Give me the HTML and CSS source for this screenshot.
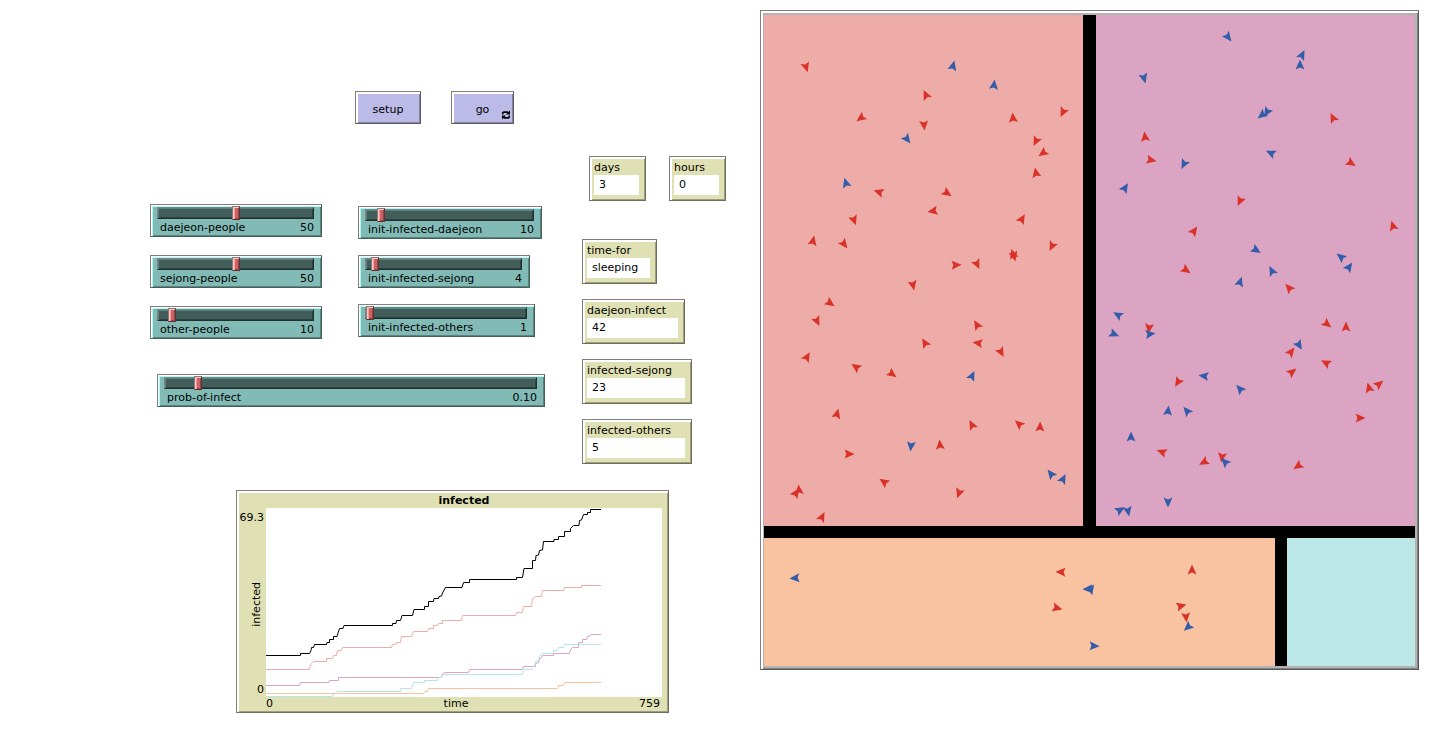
FILE: index.html
```html
<!DOCTYPE html>
<html lang="en">
<head>
<meta charset="utf-8">
<title>Infection model</title>
<link rel="stylesheet" href="styles.css">
</head>
<body>
<main class="interface">
  <section class="panel" aria-label="Controls">
    <div class="buttons">
      <button class="command command-setup" type="button">setup</button>
      <button class="command command-go" type="button">go
        <svg class="forever" viewBox="0 0 10 10" aria-hidden="true">
          <path d="M1 4.4V2.6L2.4 1.2H6.6L7.4 2L9 .6V4.6H5L6.2 3.4L5.8 3H3L2.4 3.6V4.4Z"/>
          <path d="M9 5.6V7.4L7.6 8.8H3.4L2.6 8L1 9.4V5.4H5L3.8 6.6L4.2 7H7L7.6 6.4V5.6Z"/>
        </svg>
      </button>
    </div>

    <div class="workspace">
      <div class="sliders">
        <div class="slider-columns">
          <div class="slider-column">
            <div class="slider">
              <input type="range" id="daejeon-people" min="0" max="100" value="50">
              <label for="daejeon-people">daejeon-people</label><output for="daejeon-people">50</output>
            </div>
            <div class="slider">
              <input type="range" id="sejong-people" min="0" max="100" value="50">
              <label for="sejong-people">sejong-people</label><output for="sejong-people">50</output>
            </div>
            <div class="slider">
              <input type="range" id="other-people" min="0" max="150" value="10">
              <label for="other-people">other-people</label><output for="other-people">10</output>
            </div>
          </div>
          <div class="slider-column slider-column-initial">
            <div class="slider slider-wide">
              <input type="range" id="init-daejeon" min="0" max="150" value="10">
              <label for="init-daejeon">init-infected-daejeon</label><output for="init-daejeon">10</output>
            </div>
            <div class="slider">
              <input type="range" id="init-sejong" min="0" max="120" value="4">
              <label for="init-sejong">init-infected-sejong</label><output for="init-sejong">4</output>
            </div>
            <div class="slider slider-medium">
              <input type="range" id="init-others" min="1" max="100" value="1">
              <label for="init-others">init-infected-others</label><output for="init-others">1</output>
            </div>
          </div>
        </div>
        <div class="slider slider-full">
          <input type="range" id="prob" min="0" max="1.25" step="0.01" value="0.10">
          <label for="prob">prob-of-infect</label><output for="prob">0.10</output>
        </div>
      </div>

      <div class="monitors">
        <div class="clock">
          <div class="monitor monitor-xs"><span>days</span><output>3</output></div>
          <div class="monitor monitor-xs"><span>hours</span><output>0</output></div>
        </div>
        <div class="monitor monitor-sm"><span>time-for</span><output>sleeping</output></div>
        <div class="monitor monitor-md"><span>daejeon-infect</span><output>42</output></div>
        <div class="monitor monitor-lg"><span>infected-sejong</span><output>23</output></div>
        <div class="monitor monitor-lg"><span>infected-others</span><output>5</output></div>
      </div>
    </div>

    <figure class="plot">
      <figcaption>infected</figcaption>
      <div class="axis-y"><span>69.3</span><span class="axis-name">infected</span><span>0</span></div>
      <svg class="chart" viewBox="0 0 396 189" preserveAspectRatio="none" role="img" aria-label="infected over time">
        <polyline class="line-orange" points="0,185.5 157.5,185.5 158.5,183.5 161.5,183.5 162.5,180.5 291.5,180.5 292.5,177.5 297.5,177.5 298.5,174.5 335,174.5"/>
        <polyline class="line-purple" points="0,177.5 33.5,177.5 34.5,174.5 63,174.5 63.5,172.5 72.5,172.5 72.5,169.5 175,169.5 176,166.5 178.5,164.5 202.5,164.5 203.5,161.5 256.5,161.5 257.5,158.5 269.5,158.5 269.5,155.5 272.5,155 273.5,150.5 275.5,150 276.5,147.5 287.5,147.5 287.5,145.5 303.5,145.5 305,141 306.5,139.5 312.5,139.5 312.5,134.5 316.5,134.5 316.5,131.5 320.5,131.5 321.5,128.5 323.5,128.5 324.5,126.5 335,126.5"/>
        <polyline class="line-cyan" points="0,188.5 66.5,188.5 67.5,186 69.5,185.5 70.5,183.5 134.5,183.5 134.5,180.5 145.5,180.5 147.5,174.5 158.5,174.5 158.5,172.5 171.5,172.5 172.5,169.5 175.5,169.5 176.5,166.5 256.5,166.5 257.5,161.5 265.5,161.5 266.5,158.5 269,157.5 269.5,153.5 272.5,153 273.5,147.5 276.5,145.5 287.5,145.5 287.5,142.5 291.5,142.5 292.5,139.5 297.5,139.5 298.5,136.5 335,136.5"/>
        <polyline class="line-pink" points="0,161.5 43.5,161.5 44,158.5 45.5,155.5 47.5,153.5 60.5,153.5 60.5,150.5 66.5,150.5 67.5,147.5 70.5,147.5 71.5,142.5 75,142.5 76.5,139.5 125.5,139.5 126.5,136.5 129.5,136.5 130.5,134.5 134.5,134.5 135.5,128.5 145.5,128.5 147.5,123.5 161.5,123.5 162.5,120.5 167.5,120.5 167.5,117.5 171.5,117.5 172.5,115.5 176.5,115.5 176.5,112.5 195.5,112.5 196.5,107.5 249.5,107.5 250.5,104.5 256.5,104.5 257.5,98.5 265.5,98.5 266.5,90.5 269.5,88.5 275.5,88.5 276.5,82.5 297.5,82.5 298.5,79.5 315.5,79.5 315.5,77.5 335,77.5"/>
        <polyline class="line-black" points="0,147.5 34.5,147.5 34.5,145.5 43.5,145.5 45,142.5 45.5,139.5 47.5,139.5 48.5,136.5 60.5,136.5 61,134.5 63.5,134.5 63.5,131.5 67.5,131.5 67.5,128.5 71,128.5 72,125 73.5,120.5 77,120.5 78,117.5 126.5,117.5 126.5,115.5 130,115.5 130.5,112.5 134.5,112.5 136,107.5 146.5,107.5 148,101.5 158.5,101.5 158.5,98.5 162.5,98.5 162.5,93.5 167.5,93.5 168,90.5 172.5,90.5 173,88.5 175.5,88 176.5,85 179.5,79.5 196,79.5 197.5,74.5 203.5,74.5 203.5,71.5 250.5,71.5 250.5,69.5 256.5,69.5 258,60.5 266.5,60.5 266.5,52.5 269.5,52.5 270,47.5 272.5,47 273.5,42.5 276.5,42 277.5,33.5 288,33.5 288,31.5 292.5,31.5 292.5,28.5 298.5,28.5 298.5,23.5 304.5,23.5 304.5,20.5 307.5,17.5 313,17.5 313.5,12.5 315.5,12 317.5,6.5 321.5,6.5 321.5,4.5 324.5,4.5 324.5,1.5 335,1.5"/>
      </svg>
      <div class="axis-x"><span>0</span><span>time</span><span>759</span></div>
    </figure>
  </section>

  <section class="world" aria-label="World view">
    <svg viewBox="764 15 651 651" role="img" aria-label="People in four regions">
      <defs><path id="t" d="M0-5.6L4.5 4.4L0 2.6L-4.5 4.4Z"/></defs>
      <g shape-rendering="crispEdges">
        <rect x="764" y="15" width="651" height="651" fill="#000"/>
        <rect class="patch-pink" x="764" y="15" width="319" height="511"/>
        <rect class="patch-purple" x="1096" y="15" width="319" height="511"/>
        <rect class="patch-orange" x="764" y="538" width="511" height="128"/>
        <rect class="patch-cyan" x="1287" y="538" width="128" height="128"/>
      </g>
      <g class="infected">
        <use href="#t" transform="translate(806 67) rotate(163)"/>
        <use href="#t" transform="translate(926 95) rotate(335)"/>
        <use href="#t" transform="translate(861 118) rotate(234)"/>
        <use href="#t" transform="translate(924 125) rotate(175)"/>
        <use href="#t" transform="translate(1013 118) rotate(355)"/>
        <use href="#t" transform="translate(1063 112) rotate(205)"/>
        <use href="#t" transform="translate(1036 141) rotate(206)"/>
        <use href="#t" transform="translate(1043 153) rotate(234)"/>
        <use href="#t" transform="translate(1036 173) rotate(348)"/>
        <use href="#t" transform="translate(879 192) rotate(288)"/>
        <use href="#t" transform="translate(947 193) rotate(124)"/>
        <use href="#t" transform="translate(933 211) rotate(261)"/>
        <use href="#t" transform="translate(1022 219) rotate(31)"/>
        <use href="#t" transform="translate(854 220) rotate(160)"/>
        <use href="#t" transform="translate(813 241) rotate(12)"/>
        <use href="#t" transform="translate(844 244) rotate(142)"/>
        <use href="#t" transform="translate(1052 246) rotate(205)"/>
        <use href="#t" transform="translate(1013 254) rotate(343)"/>
        <use href="#t" transform="translate(1014 256) rotate(165)"/>
        <use href="#t" transform="translate(956 265) rotate(88)"/>
        <use href="#t" transform="translate(977 264) rotate(155)"/>
        <use href="#t" transform="translate(913 285) rotate(168)"/>
        <use href="#t" transform="translate(830 303) rotate(125)"/>
        <use href="#t" transform="translate(817 321) rotate(155)"/>
        <use href="#t" transform="translate(977 325) rotate(329)"/>
        <use href="#t" transform="translate(925 343) rotate(329)"/>
        <use href="#t" transform="translate(978 343) rotate(278)"/>
        <use href="#t" transform="translate(1001 352) rotate(152)"/>
        <use href="#t" transform="translate(807 357) rotate(30)"/>
        <use href="#t" transform="translate(856 367) rotate(305)"/>
        <use href="#t" transform="translate(892 374) rotate(126)"/>
        <use href="#t" transform="translate(837 414) rotate(15)"/>
        <use href="#t" transform="translate(972 425) rotate(333)"/>
        <use href="#t" transform="translate(1019 424) rotate(312)"/>
        <use href="#t" transform="translate(1040 427) rotate(2)"/>
        <use href="#t" transform="translate(940 445) rotate(355)"/>
        <use href="#t" transform="translate(849 454) rotate(90)"/>
        <use href="#t" transform="translate(884 482) rotate(305)"/>
        <use href="#t" transform="translate(959 493) rotate(200)"/>
        <use href="#t" transform="translate(799 490) rotate(355)"/>
        <use href="#t" transform="translate(796 493) rotate(32)"/>
        <use href="#t" transform="translate(822 517) rotate(27)"/>
        <use href="#t" transform="translate(1333 118) rotate(333)"/>
        <use href="#t" transform="translate(1145 137) rotate(353)"/>
        <use href="#t" transform="translate(1151 160) rotate(102)"/>
        <use href="#t" transform="translate(1351 163) rotate(122)"/>
        <use href="#t" transform="translate(1240 201) rotate(204)"/>
        <use href="#t" transform="translate(1194 231) rotate(36)"/>
        <use href="#t" transform="translate(1393 226) rotate(343)"/>
        <use href="#t" transform="translate(1186 270) rotate(124)"/>
        <use href="#t" transform="translate(1289 288) rotate(318)"/>
        <use href="#t" transform="translate(1149 328) rotate(187)"/>
        <use href="#t" transform="translate(1327 324) rotate(128)"/>
        <use href="#t" transform="translate(1346 327) rotate(0)"/>
        <use href="#t" transform="translate(1291 352) rotate(38)"/>
        <use href="#t" transform="translate(1326 363) rotate(298)"/>
        <use href="#t" transform="translate(1292 372) rotate(52)"/>
        <use href="#t" transform="translate(1178 382) rotate(212)"/>
        <use href="#t" transform="translate(1369 388) rotate(345)"/>
        <use href="#t" transform="translate(1379 384) rotate(50)"/>
        <use href="#t" transform="translate(1360 418) rotate(90)"/>
        <use href="#t" transform="translate(1162 452) rotate(290)"/>
        <use href="#t" transform="translate(1204 462) rotate(242)"/>
        <use href="#t" transform="translate(1222 457) rotate(188)"/>
        <use href="#t" transform="translate(1298 466) rotate(236)"/>
        <use href="#t" transform="translate(1061 572) rotate(272)"/>
        <use href="#t" transform="translate(1057 608) rotate(105)"/>
        <use href="#t" transform="translate(1192 570) rotate(0)"/>
        <use href="#t" transform="translate(1181 606) rotate(75)"/>
        <use href="#t" transform="translate(1186 617) rotate(175)"/>
      </g>
      <g class="healthy">
        <use href="#t" transform="translate(953 66) rotate(15)"/>
        <use href="#t" transform="translate(994 85) rotate(7)"/>
        <use href="#t" transform="translate(907 139) rotate(143)"/>
        <use href="#t" transform="translate(846 183) rotate(343)"/>
        <use href="#t" transform="translate(972 376) rotate(25)"/>
        <use href="#t" transform="translate(911 446) rotate(186)"/>
        <use href="#t" transform="translate(1051 474) rotate(322)"/>
        <use href="#t" transform="translate(1063 479) rotate(27)"/>
        <use href="#t" transform="translate(1228 37) rotate(142)"/>
        <use href="#t" transform="translate(1302 55) rotate(27)"/>
        <use href="#t" transform="translate(1300 65) rotate(0)"/>
        <use href="#t" transform="translate(1144 78) rotate(164)"/>
        <use href="#t" transform="translate(1267 112) rotate(210)"/>
        <use href="#t" transform="translate(1262 115) rotate(232)"/>
        <use href="#t" transform="translate(1184 164) rotate(207)"/>
        <use href="#t" transform="translate(1271 153) rotate(295)"/>
        <use href="#t" transform="translate(1125 188) rotate(32)"/>
        <use href="#t" transform="translate(1256 250) rotate(123)"/>
        <use href="#t" transform="translate(1341 257) rotate(308)"/>
        <use href="#t" transform="translate(1349 267) rotate(35)"/>
        <use href="#t" transform="translate(1272 271) rotate(333)"/>
        <use href="#t" transform="translate(1240 282) rotate(18)"/>
        <use href="#t" transform="translate(1118 315) rotate(300)"/>
        <use href="#t" transform="translate(1114 334) rotate(113)"/>
        <use href="#t" transform="translate(1150 334) rotate(83)"/>
        <use href="#t" transform="translate(1299 345) rotate(148)"/>
        <use href="#t" transform="translate(1204 376) rotate(278)"/>
        <use href="#t" transform="translate(1240 389) rotate(318)"/>
        <use href="#t" transform="translate(1168 411) rotate(6)"/>
        <use href="#t" transform="translate(1187 411) rotate(320)"/>
        <use href="#t" transform="translate(1131 437) rotate(0)"/>
        <use href="#t" transform="translate(1225 462) rotate(315)"/>
        <use href="#t" transform="translate(1168 502) rotate(180)"/>
        <use href="#t" transform="translate(1120 510) rotate(60)"/>
        <use href="#t" transform="translate(1128 511) rotate(168)"/>
        <use href="#t" transform="translate(795 578) rotate(266)"/>
        <use href="#t" transform="translate(1088 589) rotate(268)"/>
        <use href="#t" transform="translate(1091 589) rotate(35)"/>
        <use href="#t" transform="translate(1094 646) rotate(92)"/>
        <use href="#t" transform="translate(1188 627) rotate(228)"/>
      </g>
    </svg>
  </section>
</main>
</body>
</html>
```
FILE: styles.css
```css
* { box-sizing: border-box; }

body {
  margin: 0;
  background: #fff;
  color: #000;
  font: 11px/14px "DejaVu Sans", sans-serif;
}

.interface {
  display: flex;
  align-items: flex-start;
  padding-right: 17px;
}

.panel {
  flex: 0 0 760px;
  padding-top: 91px;
}

/* Command buttons */
.buttons {
  display: flex;
  gap: 30px;
  margin-left: 355px;
}

.command {
  position: relative;
  height: 33px;
  padding: 4px 0 0;
  border: 1px solid;
  border-color: #808080 #5c5b70 #5c5b70 #808080;
  background: #bcbae6;
  box-shadow: inset 2px 2px #fff, inset -1px -1px #8483a1;
  font: inherit;
  color: inherit;
}
.command-setup { width: 66px; }
.command-go { width: 63px; }

.forever {
  position: absolute;
  right: 2px;
  bottom: 3px;
  width: 10px;
  height: 10px;
}

.workspace {
  display: flex;
  margin-top: 32px;
  padding-left: 150px;
}

/* Sliders */
.sliders {
  flex: 0 0 432px;
  padding-top: 48px;
}

.slider-columns {
  display: flex;
  gap: 36px;
}

.slider-column {
  display: flex;
  flex-direction: column;
  gap: 18px;
}
.slider-column-initial {
  gap: 16px;
  padding-top: 2px;
}

.slider {
  display: grid;
  grid-template-columns: 1fr auto;
  align-content: start;
  width: 172px;
  height: 33px;
  padding: 1px 7px 0 6px;
  border: 1px solid;
  border-color: #808080 #43605d #43605d #808080;
  background: #82bbb6;
  box-shadow: inset 1px 1px #fff, inset 2px 2px #a8fbf8, inset -1px -1px #5b837f;
}
.slider-medium { width: 177px; }
.slider-wide { width: 184px; }
.slider-full {
  width: 388px;
  margin: 35px 0 0 7px;
}
.slider label { padding: 1px 0 0 3px; }
.slider output { padding-top: 1px; }

.slider input {
  grid-column: 1 / -1;
  appearance: none;
  width: 100%;
  height: 14px;
  margin: 0;
  background: none;
}
.slider input::-webkit-slider-runnable-track {
  height: 12px;
  border: 1px solid;
  border-color: #808080 #20302e #20302e #808080;
  background: #425e5b;
  box-shadow: inset 1px 1px #5b837f, inset -1px -1px #2e413f;
}
.slider input::-webkit-slider-thumb {
  appearance: none;
  width: 8px;
  height: 14px;
  margin-top: -2px;
  border: 1px solid;
  border-color: #808080 #643030 #643030 #808080;
  background: #c86464;
  box-shadow: inset 1px 1px #ffc0c0, inset 2px 1px #ff9c9c, inset -1px -1px #8c4646;
}

/* Monitors */
.monitors {
  display: flex;
  flex-direction: column;
  align-items: flex-start;
  gap: 15px;
}

.clock {
  display: flex;
  gap: 23px;
  margin: 0 0 23px 7px;
}

.monitor {
  display: flex;
  flex-direction: column;
  height: 45px;
  padding: 4px 6px 5px 4px;
  border: 1px solid;
  border-color: #808080 #6e6e59 #6e6e59 #808080;
  background: #dfe0b3;
  box-shadow: inset 2px 2px #fff, inset -1px -1px #9c9d7d;
}
.monitor-xs { width: 57px; }
.monitor-sm { width: 75px; }
.monitor-md { width: 103px; }
.monitor-lg { width: 110px; }
.monitor output {
  height: 20px;
  padding: 3px 5px;
  background: #fff;
}

/* Plot */
.plot {
  display: grid;
  grid-template-columns: 29px 1fr;
  width: 433px;
  margin: 26px 0 0 236px;
  padding: 3px 6px 0 0;
  border: 1px solid;
  border-color: #808080 #6e6e59 #6e6e59 #808080;
  background: #dfe0b3;
  box-shadow: inset 2px 2px #fff, inset -1px -1px #9c9d7d;
}
.plot figcaption {
  grid-column: 2;
  text-align: center;
  font-weight: bold;
}
.axis-y {
  display: flex;
  flex-direction: column;
  justify-content: space-between;
  align-items: flex-end;
  padding: 3px 2px 0 0;
}
.axis-name {
  writing-mode: vertical-rl;
  transform: rotate(180deg);
}
.axis-x {
  grid-column: 2;
  display: flex;
  justify-content: space-between;
  height: 15px;
  padding-right: 2px;
}

.chart {
  display: block;
  width: 100%;
  height: 189px;
  background: #fff;
}
.chart polyline { fill: none; stroke-width: 1; }
.line-black { stroke: #000; }
.line-pink { stroke: #efaca8; }
.line-purple { stroke: #dba4c4; }
.line-cyan { stroke: #b4e6e6; }
.line-orange { stroke: #f9c2a1; }

/* World view */
.world {
  flex: 1 1 0;
  min-width: 0;
  margin-top: 10px;
  padding: 4px 3px 3px 3px;
  border: 1px solid;
  border-color: #808080 #5a5a5a #5a5a5a #808080;
  background: #b3b3b3;
  box-shadow: inset 2px 2px #fff, inset -1px -1px #808080;
}
.world svg { display: block; width: 100%; }
.patch-pink { fill: #eeaca9; }
.patch-purple { fill: #dba4c3; }
.patch-orange { fill: #f9c3a1; }
.patch-cyan { fill: #bbe7e7; }
.infected { fill: #d93229; }
.healthy { fill: #345da9; }
```
